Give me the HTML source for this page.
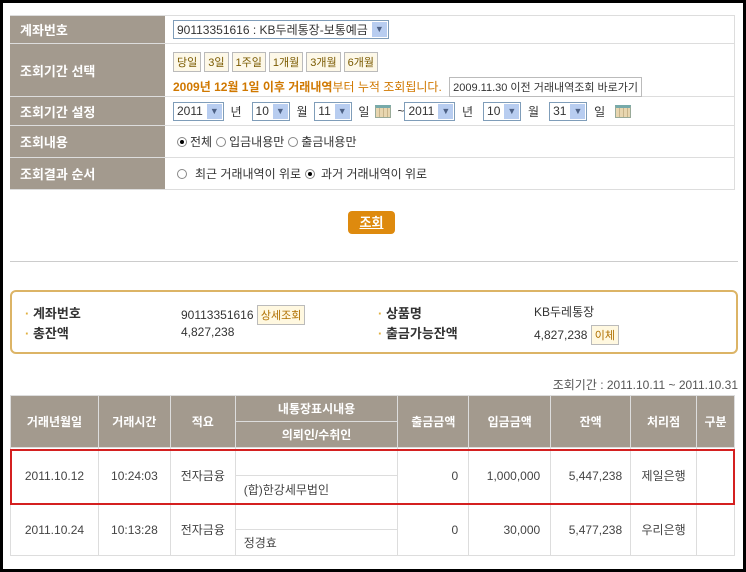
<!DOCTYPE html>
<html><head><meta charset="utf-8"><style>
*{box-sizing:border-box;margin:0;padding:0}
body{width:746px;height:572px;background:#000;font-family:"Liberation Sans","Noto Sans CJK KR","NanumGothic",sans-serif;font-size:12px;color:#333;position:relative;overflow:hidden}
#w{position:absolute;left:3px;top:3px;width:740px;height:566px;background:#fff}
.a{position:absolute}
.lab{position:absolute;left:7px;width:155px;background:#a39a8e;color:#fff;font-weight:bold;font-size:13px;padding-left:10px;display:flex;align-items:center;border-bottom:1px solid #ddd}
.val{position:absolute;left:162px;width:570px;border-bottom:1px solid #ddd;border-right:1px solid #ddd;padding-left:8px;display:flex;align-items:center;font-size:12px}
.sel{display:inline-flex;align-items:center;border:1px solid #7f9db9;height:19px;padding-left:3px;background:#fff;font-size:12px}
.sel i{display:inline-block;width:15px;height:15px;background:#b8cdf0;margin:0 1px 0 4px;font-style:normal;color:#4d6185;font-size:9px;text-align:center;line-height:15px}
.b{display:inline-block;border:1px solid #bbb;background:#fdf8e8;color:#7a5a00;font-size:11px;padding:1px 3px;margin-right:3px}
.rad{display:inline-block;width:10px;height:10px;border:1px solid #888;border-radius:50%;margin:0 3px 0 4px;position:relative;vertical-align:-1px}
.rad.on:after{content:"";position:absolute;left:2px;top:2px;width:4px;height:4px;background:#000;border-radius:50%}
.cal{display:inline-block;width:16px;height:13px;border:1px solid #9a9;background:repeating-linear-gradient(90deg,#e8d6b0 0 3px,#c8b48a 3px 4px);border-top:3px solid #7aa;margin:0 6px}
table{border-collapse:collapse;position:absolute;left:7px;top:392px;width:725px;font-size:12px}
th{background:#a39a8e;color:#fff;font-weight:bold;border:1px solid #ddd;height:26px;font-size:12px}
td{border:1px solid #ddd;height:26px;text-align:center;color:#444}
</style></head><body><div id="w">
<div class="lab" style="top:12px;height:29px;border-top:1px solid #ddd">계좌번호</div>
<div class="val" style="top:12px;height:29px;border-top:1px solid #ddd"><span class="sel">90113351616 : KB두레통장-보통예금<i>▼</i></span></div>
<div class="lab" style="top:41px;height:53px">조회기간 선택</div>
<div class="val" style="top:41px;height:53px;display:block;padding-top:8px">
<div><span class="b">당일</span><span class="b">3일</span><span class="b">1주일</span><span class="b">1개월</span><span class="b">3개월</span><span class="b">6개월</span></div>
<div style="margin-top:5px;color:#d07800"><b>2009년 12월 1일 이후 거래내역</b>부터 누적 조회됩니다. <span class="b" style="color:#333;background:#fff;margin-left:4px">2009.11.30 이전 거래내역조회 바로가기</span></div></div>
<div class="lab" style="top:94px;height:29px">조회기간 설정</div>
<div class="val" style="top:94px;height:29px"><span class="sel">2011<i>▼</i></span>&nbsp; 년 &nbsp;&nbsp;<span class="sel">10<i>▼</i></span>&nbsp; 월 &nbsp;<span class="sel">11<i>▼</i></span>&nbsp; 일<span class="cal"></span>~ <span class="sel">2011<i>▼</i></span>&nbsp; 년 &nbsp;&nbsp;<span class="sel">10<i>▼</i></span>&nbsp; 월 &nbsp;&nbsp;<span class="sel">31<i>▼</i></span>&nbsp; 일 <span class="cal" style="margin-left:10px"></span></div>
<div class="lab" style="top:123px;height:32px">조회내용</div>
<div class="val" style="top:123px;height:32px"><span class="rad on"></span>전체 <span class="rad"></span>입금내용만 <span class="rad"></span>출금내용만</div>
<div class="lab" style="top:155px;height:32px">조회결과 순서</div>
<div class="val" style="top:155px;height:32px"><span class="rad" style="margin-right:8px"></span>최근 거래내역이 위로 <span class="rad on" style="margin-right:6px"></span>과거 거래내역이 위로</div>
<div class="a" style="left:345px;top:208px;width:47px;height:23px;background:#de8a0e;border-radius:4px;color:#fff;font-weight:bold;text-align:center;line-height:23px;font-size:13px"><u>조회</u></div>
<div class="a" style="left:7px;top:258px;width:728px;border-top:1px solid #ccc"></div>
<div class="a" style="left:7px;top:287px;width:728px;height:64px;border:2px solid #dcb466;border-radius:6px"></div>
<div class="a" style="left:22px;top:300px;font-weight:bold;font-size:13px"><span style="color:#e0b040">·</span> 계좌번호</div>
<div class="a" style="left:22px;top:320px;font-weight:bold;font-size:13px"><span style="color:#e0b040">·</span> 총잔액</div>
<div class="a" style="left:178px;top:302px">90113351616 <span class="b" style="color:#b07000;background:#fff8e0">상세조회</span></div>
<div class="a" style="left:178px;top:322px">4,827,238</div>
<div class="a" style="left:375px;top:300px;font-weight:bold;font-size:13px"><span style="color:#e0b040">·</span> 상품명</div>
<div class="a" style="left:375px;top:320px;font-weight:bold;font-size:13px"><span style="color:#e0b040">·</span> 출금가능잔액</div>
<div class="a" style="left:531px;top:300px">KB두레통장</div>
<div class="a" style="left:531px;top:322px">4,827,238 <span class="b" style="color:#b07000;background:#fff8e0">이체</span></div>
<div class="a" style="right:5px;top:373px;color:#555">조회기간 : 2011.10.11 ~ 2011.10.31</div>
<table>
<colgroup><col style="width:88px"><col style="width:72px"><col style="width:65px"><col style="width:163px"><col style="width:71px"><col style="width:82px"><col style="width:80px"><col style="width:66px"><col style="width:38px"></colgroup>
<tr><th rowspan="2">거래년월일</th><th rowspan="2">거래시간</th><th rowspan="2">적요</th><th>내통장표시내용</th><th rowspan="2">출금금액</th><th rowspan="2">입금금액</th><th rowspan="2">잔액</th><th rowspan="2">처리점</th><th rowspan="2">구분</th></tr>
<tr><th>의뢰인/수취인</th></tr>
<tr><td rowspan="2">2011.10.12</td><td rowspan="2">10:24:03</td><td rowspan="2">전자금융</td><td style="height:28px"></td><td rowspan="2" style="text-align:right;padding-right:10px">0</td><td rowspan="2" style="text-align:right;padding-right:10px">1,000,000</td><td rowspan="2" style="text-align:right;padding-right:8px">5,447,238</td><td rowspan="2">제일은행</td><td rowspan="2"></td></tr>
<tr><td style="text-align:left;padding-left:8px;height:28px">(합)한강세무법인</td></tr>
<tr><td rowspan="2">2011.10.24</td><td rowspan="2">10:13:28</td><td rowspan="2">전자금융</td><td style="height:26px"></td><td rowspan="2" style="text-align:right;padding-right:10px">0</td><td rowspan="2" style="text-align:right;padding-right:10px">30,000</td><td rowspan="2" style="text-align:right;padding-right:8px">5,477,238</td><td rowspan="2">우리은행</td><td rowspan="2"></td></tr>
<tr><td style="text-align:left;padding-left:8px;height:26px">정경효</td></tr>
</table>
<div class="a" style="left:7px;top:446px;width:725px;height:56px;border:2px solid #d42020"></div>
</div></body></html>
